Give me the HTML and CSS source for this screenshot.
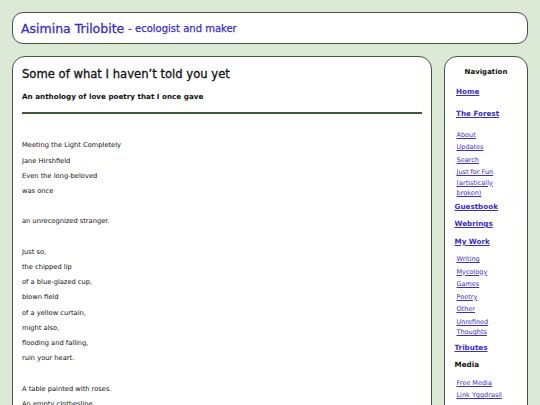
FILE: index.html
```html
<!DOCTYPE html>
<html lang="en">
<head>
    <meta charset="UTF-8">
    <meta name="viewport" content="width=device-width, initial-scale=1.0">
    <title>Asimina Trilobite - Some of what I haven't told you yet</title>
    <link rel="stylesheet" href="styles.css">
</head>
<body>
    <header class="header">
        <a href="#" class="site-name">Asimina Trilobite</a> <span class="tagline">- ecologist and maker</span>
    </header>

    <div class="layout">
        <main class="content">
            <h1>Some of what I haven’t told you yet</h1>
            <h2>An anthology of love poetry that I once gave</h2>
            <hr>

            <div class="poem">
                <p>Meeting the Light Completely</p>
                <p>Jane Hirshfield</p>
                <p>Even the long-beloved</p>
                <p>was once</p>
                <p class="gap">an unrecognized stranger.</p>
                <p class="gap">Just so,</p>
                <p>the chipped lip</p>
                <p>of a blue-glazed cup,</p>
                <p>blown field</p>
                <p>of a yellow curtain,</p>
                <p>might also,</p>
                <p>flooding and falling,</p>
                <p>ruin your heart.</p>
                <p class="gap">A table painted with roses.</p>
                <p>An empty clothesline.</p>
                <p>A hand.</p>
            </div>
        </main>

        <nav class="sidebar">
            <h3>Navigation</h3>
            <a href="#" class="nav-main home">Home</a>
            <a href="#" class="nav-main forest">The Forest</a>
            <ul class="forest-list">
                <li><a href="#">About</a></li>
                <li><a href="#">Updates</a></li>
                <li><a href="#">Search</a></li>
                <li><a href="#">Just for Fun (artistically broken)</a></li>
            </ul>
            <a href="#" class="nav-main">Guestbook</a>
            <a href="#" class="nav-main">Webrings</a>
            <a href="#" class="nav-main">My Work</a>
            <ul>
                <li><a href="#">Writing</a></li>
                <li><a href="#">Mycology</a></li>
                <li><a href="#">Games</a></li>
                <li><a href="#">Poetry</a></li>
                <li><a href="#">Other</a></li>
                <li><a href="#">Unrefined Thoughts</a></li>
            </ul>
            <a href="#" class="nav-main">Tributes</a>
            <span class="nav-label">Media</span>
            <ul class="media-list">
                <li><a href="#">Free Media</a></li>
                <li><a href="#">Link Yggdrasil</a></li>
            </ul>
        </nav>
    </div>
</body>
</html>
```

FILE: styles.css
```css
body {
    font-family: "DejaVu Sans", Verdana, sans-serif;
    background-color: #dce9d7;
    margin: 0;
    padding: 12px 12px 0 12px;
    color: #111;
}
a {
    color: #3a2fc2;
}
.header {
    background: white;
    border: 1.5px solid #40583c;
    border-radius: 11px;
    height: 30px;
    padding: 0 8px;
    display: flex;
    align-items: center;
    gap: 4px;
    color: #3a2fc2;
}
.site-name {
    font-size: 12.5px;
    text-decoration: none;
    -webkit-text-stroke: 0.3px #3a2fc2;
}
.tagline {
    font-size: 10px;
    -webkit-text-stroke: 0.25px #3a2fc2;
}
.layout {
    display: flex;
    gap: 12px;
    margin-top: 12px;
    align-items: flex-start;
}
.content {
    flex: 1;
    background: white;
    border: 1.5px solid #40583c;
    border-radius: 13px;
    padding: 10px 9px 20px 9px;
}
h1 {
    font-size: 11.6px;
    line-height: 14px;
    font-weight: normal;
    margin: 0 0 11px 0;
    -webkit-text-stroke: 0.3px #111;
}
h2 {
    font-size: 7.2px;
    line-height: 10px;
    margin: 0 0 10px 0;
}
hr {
    border: none;
    border-top: 2px solid #40583c;
    margin: 0 0 24.4px 0;
}
.poem p {
    font-size: 6.7px;
    margin: 0;
    line-height: 15.2px;
}
.poem .gap {
    margin-top: 15.2px;
}
.sidebar {
    width: 84px;
    flex: none;
    background: white;
    border: 1.5px solid #40583c;
    border-radius: 13px;
    padding: 9.5px 12px 20px 9.5px;
    box-sizing: border-box;
    height: 370px;
}
.sidebar h3 {
    font-size: 7px;
    line-height: 10px;
    text-align: center;
    margin: 0 -2.5px 10px 0;
}
.nav-main, .nav-label {
    display: block;
    font-size: 7.2px;
    line-height: 10px;
    font-weight: bold;
    margin-bottom: 7.5px;
}
.nav-main.home {
    margin-bottom: 12px;
    padding-left: 1.5px;
}
.nav-main.forest {
    margin-bottom: 11px;
    padding-left: 1.5px;
}
.nav-label {
    color: #111;
}
.sidebar ul {
    list-style: none;
    margin: 4px 0 5px 0;
    padding: 0 0 0 2px;
}
.sidebar ul.forest-list {
    margin-bottom: 3px;
}
.sidebar ul.media-list {
    margin-top: 6px;
}
.sidebar li {
    font-size: 6.5px;
    line-height: 10.5px;
    margin-bottom: 2px;
}
```
